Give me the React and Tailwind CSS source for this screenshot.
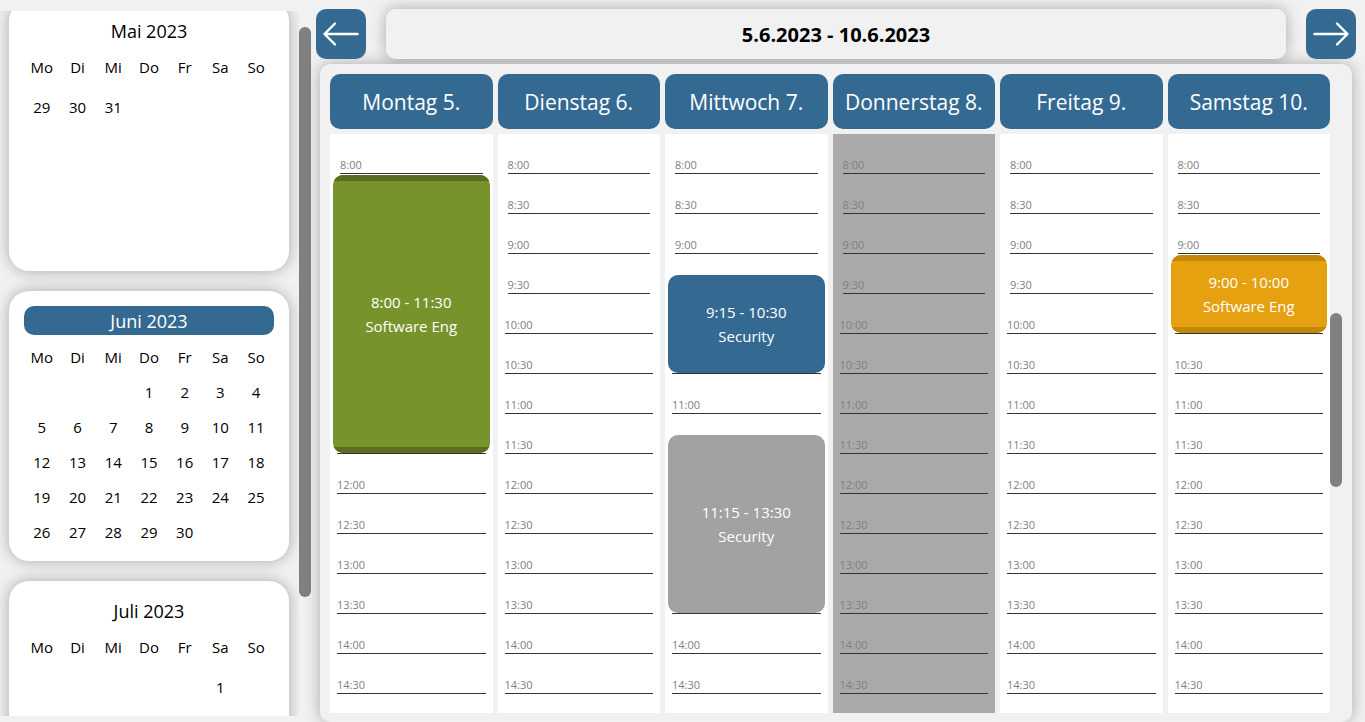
const WEEKDAYS = ["Mo", "Di", "Mi", "Do", "Fr", "Sa", "So"];

const MONTHS = [
  { name: "Mai 2023", weeks: [[29, 30, 31, "", "", "", ""]] },
  {
    name: "Juni 2023",
    current: true,
    weeks: [
      ["", "", "", 1, 2, 3, 4],
      [5, 6, 7, 8, 9, 10, 11],
      [12, 13, 14, 15, 16, 17, 18],
      [19, 20, 21, 22, 23, 24, 25],
      [26, 27, 28, 29, 30, "", ""],
    ],
  },
  { name: "Juli 2023", weeks: [["", "", "", "", "", 1, ""]] },
];

const SLOT_HEIGHT = 40;
const DAY_START = 8 * 60;
const SLOTS = Array.from({ length: 14 }, (_, i) => DAY_START + i * 30);

const DAYS = [
  {
    name: "Montag 5.",
    events: [{ start: 480, end: 690, title: "Software Eng", fill: "bg-[#77932b]", edge: "border-[#5a6d20]" }],
  },
  { name: "Dienstag 6.", events: [] },
  {
    name: "Mittwoch 7.",
    events: [
      { start: 555, end: 630, title: "Security", fill: "bg-[#346a92]" },
      { start: 675, end: 810, title: "Security", fill: "bg-[#a2a2a2]" },
    ],
  },
  { name: "Donnerstag 8.", blocked: true, events: [] },
  { name: "Freitag 9.", events: [] },
  {
    name: "Samstag 10.",
    events: [{ start: 540, end: 600, title: "Software Eng", fill: "bg-[#e5a110]", edge: "border-[#c1880a]" }],
  },
];

function formatTime(minutes) {
  return `${Math.floor(minutes / 60)}:${String(minutes % 60).padStart(2, "0")}`;
}

function Arrow({ className }) {
  return (
    <svg viewBox="0 0 50 50" className={className} fill="none" stroke="white" strokeWidth="2.4" strokeLinecap="round" strokeLinejoin="round" aria-hidden="true">
      <path d="M41.500 25H8.500M19 14.500L8.500 25L19 35.500" />
    </svg>
  );
}

function NavButton({ label, flip }) {
  return (
    <button type="button" aria-label={label} className="relative z-20 size-[50px] shrink-0 rounded-[10px] bg-[#346a92]">
      <Arrow className={flip ? "size-full rotate-180" : "size-full"} />
    </button>
  );
}

function Month({ month }) {
  return (
    <section className="h-[270px] shrink-0 rounded-[20px] bg-white p-[15px] shadow-[0_0_15px_rgba(0,0,0,0.3)]">
      <h2
        className={`mb-1 h-[29px] rounded-[10px] text-center text-lg leading-[30px] ${
          month.current ? "bg-[#346a92] text-white" : ""
        }`}
      >
        {month.name}
      </h2>
      <table className={`w-full table-fixed text-center text-[15px] leading-5 ${month.current ? "h-[211px]" : ""}`}>
        <thead>
          <tr className="h-[35px]">
            {WEEKDAYS.map((day) => (
              <th key={day} scope="col" className="p-0 font-normal">
                {day}
              </th>
            ))}
          </tr>
        </thead>
        <tbody>
          {month.weeks.map((week, w) => (
            <tr key={w} className={month.current ? "" : "h-[45px]"}>
              {week.map((day, d) => (
                <td key={d} className="p-0">
                  {day}
                </td>
              ))}
            </tr>
          ))}
        </tbody>
      </table>
    </section>
  );
}

function Event({ event }) {
  return (
    <div
      className={`absolute inset-x-[3px] overflow-hidden rounded-[10px] ${event.fill}`}
      style={{
        top: ((event.start - DAY_START) / 30) * SLOT_HEIGHT + SLOT_HEIGHT + 1,
        height: ((event.end - event.start) / 30) * SLOT_HEIGHT - 2,
      }}
    >
      <div
        className={`flex h-full flex-col items-center justify-center text-center text-[15px] leading-6 text-white ${
          event.edge ? `border-y-[6px] ${event.edge}` : ""
        }`}
      >
        <p>
          {formatTime(event.start)} - {formatTime(event.end)}
        </p>
        <p>{event.title}</p>
      </div>
    </div>
  );
}

function Day({ day }) {
  return (
    <section className="flex min-w-0 flex-1 flex-col gap-[5px]">
      <h2 className="h-[55px] shrink-0 rounded-[10px] bg-[#346a92] text-center text-[21px] leading-[57px] whitespace-nowrap text-white">
        {day.name}
      </h2>
      <div className={`relative min-h-0 flex-1 overflow-hidden ${day.blocked ? "bg-[#aaaaaa]" : "bg-white"}`}>
        {SLOTS.map((slot) => (
          <div
            key={slot}
            className={`flex h-10 items-end border-b border-[#333] text-[11px] leading-4 text-[#808080] ${
              slot < 600 ? "mx-2.5" : "mx-[7px]"
            }`}
          >
            {formatTime(slot)}
          </div>
        ))}
        {day.events.map((event) => (
          <Event key={event.start} event={event} />
        ))}
      </div>
    </section>
  );
}

export default function App() {
  return (
    <div className="flex h-screen overflow-hidden bg-[#f1f1f1] font-['Segoe_UI','Open_Sans',sans-serif] text-black">
      <aside className="flex shrink-0 pt-[11px] pb-1.5">
        <div className="overflow-hidden pr-2.5 pl-[9px]">
          <div className="-mt-2.5 flex w-[280px] flex-col gap-5">
            {MONTHS.map((month) => (
              <Month key={month.name} month={month} />
            ))}
          </div>
        </div>
        <div className="w-3 pt-4">
          <div className="h-[570px] rounded-full bg-[#808080]" />
        </div>
      </aside>
      <main className="flex min-w-0 flex-1 flex-col pt-[9px] pr-[9px] pl-[5px]">
        <header className="flex gap-5">
          <NavButton label="Vorherige Woche" />
          <div className="flex-1 rounded-[10px] shadow-[0_0_15px_rgba(0,0,0,0.3)]">
            <h1 className="relative z-20 h-[50px] rounded-[10px] bg-[#f1f1f1] text-center text-xl leading-[52px] font-bold">
              5.6.2023 - 10.6.2023
            </h1>
          </div>
          <NavButton label="Nächste Woche" flip />
        </header>
        <div className="relative z-10 mx-1 mt-[5px] flex min-h-0 flex-1 rounded-[10px] bg-[#f1f1f1] pt-2.5 pr-2.5 pb-[9px] pl-2.5 shadow-[0_0_15px_rgba(0,0,0,0.3)]">
          <div className="flex min-w-0 flex-1 gap-[5px]">
            {DAYS.map((day) => (
              <Day key={day.name} day={day} />
            ))}
          </div>
          <div className="w-3 pt-[239px]">
            <div className="h-[174px] rounded-full bg-[#808080]" />
          </div>
        </div>
      </main>
    </div>
  );
}
